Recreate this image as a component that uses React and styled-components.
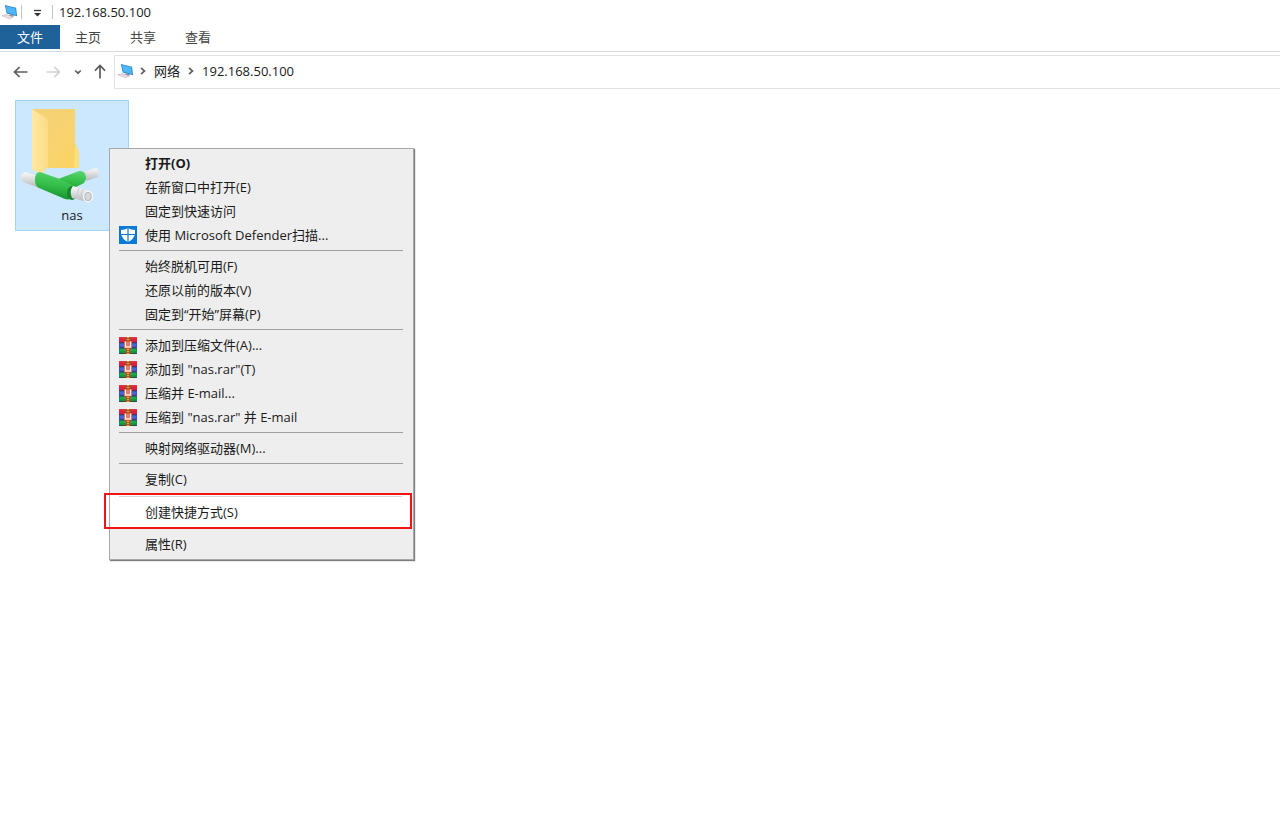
import React from "react";
import styled, { createGlobalStyle } from "styled-components";

const GlobalStyle = createGlobalStyle`
  * {
    box-sizing: border-box;
  }
  body {
    margin: 0;
    background: #ffffff;
    color: #1a1a1a;
    font-family: "Open Sans", "Noto Sans CJK SC", sans-serif;
    font-size: 13px;
    line-height: 24px;
  }
  button {
    font: inherit;
    color: inherit;
    background: none;
    border: 0;
    padding: 0;
  }
  svg {
    display: block;
    flex: none;
  }
`;

const Window = styled.div`
  display: flex;
  flex-direction: column;
  min-height: 100vh;
`;

const TitleBar = styled.header`
  display: flex;
  align-items: center;
  height: 25px;
  padding: 0 0 1px 2px;
`;

const Title = styled.h1`
  margin: 0;
  padding-left: 6px;
  font-size: 13px;
  font-weight: 400;
`;

const Divider = styled.span`
  width: 1px;
  height: 14px;
  margin: 0 ${(props) => props.$gap || 0}px 0 3px;
  background: #c4c4c4;
`;

const RibbonTabs = styled.nav`
  display: flex;
  height: 27px;
  border-bottom: 1px solid #dadbdc;
`;

const RibbonTab = styled.button`
  height: 24px;
  padding: 0 ${(props) => (props.$active ? 17 : 15)}px;
  color: ${(props) => (props.$active ? "#ffffff" : "#444444")};
  background: ${(props) => (props.$active ? "#1f6199" : "transparent")};
  & + & {
    margin-right: -1px;
  }
`;

const NavBar = styled.div`
  display: flex;
  align-items: center;
  padding-top: 3px;
`;

const NavButtons = styled.div`
  display: flex;
  align-items: center;
  width: 114px;
  padding-left: 13px;
`;

const NavButton = styled.button`
  display: flex;
  margin-right: ${(props) => props.$gap || 0}px;
  color: ${(props) => (props.disabled ? "#d2d2d2" : "#5c5c5c")};
`;

const AddressBar = styled.div`
  display: flex;
  flex: 1;
  align-items: center;
  gap: 5px;
  height: 34px;
  padding: 0 0 2px 3px;
  border: 1px solid #e2e2e2;
  border-right: 0;
`;

const Crumb = styled.button`
  padding: 0 2px;
`;

const Content = styled.main`
  position: relative;
  flex: 1;
  padding: 11px 15px;
`;

const FolderTile = styled.button`
  display: flex;
  flex-direction: column;
  align-items: center;
  width: 114px;
  height: 131px;
  padding-top: 5px;
  background: #cce8ff;
  border: 1px solid #a5d3f5;
`;

const FolderPicture = styled.span`
  align-self: flex-start;
  padding-left: 4px;
`;

const ContextMenu = styled.div`
  position: absolute;
  top: 59px;
  left: 109px;
  width: 305px;
  padding: 2px 0 3px;
  background: #eeeeee;
  border: 1px solid #a8a8a8;
  box-shadow: 1px 1px 1px rgba(0, 0, 0, 0.5);
`;

const MenuItem = styled.button`
  display: flex;
  align-items: center;
  width: 100%;
  height: 24px;
  padding-left: 9px;
  text-align: left;
  white-space: pre;
  font-weight: ${(props) => (props.$bold ? 700 : 400)};
`;

const IconSlot = styled.span`
  width: 26px;
`;

const Separator = styled.hr`
  height: 1px;
  margin: 3px 10px 3px 9px;
  border: 0;
  background: ${(props) => (props.$light ? "#d9d9d9" : "#a0a0a0")};
`;

const Highlighted = styled.div`
  position: relative;
  display: flow-root;
  margin: 2px 1px 3px 0;
  padding-bottom: 5px;
  background: #ffffff;
  &::after {
    content: "";
    position: absolute;
    inset: 0 0 0 -6px;
    border: 2px solid #f01414;
    pointer-events: none;
  }
`;

const ComputerIcon = () => (
  <svg width="16" height="16" viewBox="0 0 17 17" aria-hidden="true">
    <path d="M3 1 L15 4 L16 13 L5 10 Z" fill="#2e86c8" />
    <path d="M4 2 L14 4.6 L15 12 L5.5 9 Z" fill="#4db5fa" />
    <path d="M9 11 L13 12.4 L11 14 L7 12 Z" fill="#7d8b97" />
    <path d="M0 12.4 L4.5 11.4 L12 13.6 L8 15.6 Z" fill="#dfe1e7" stroke="#b7aebb" strokeWidth=".7" />
    <path d="M2 12.5 L9 14.5" stroke="#f6dbe1" />
  </svg>
);

const Arrow = ({ rotate = 0 }) => (
  <svg width="16" height="16" viewBox="0 0 16 16" aria-hidden="true">
    <g transform={`rotate(${rotate} 8 8)`} fill="none" stroke="currentColor" strokeWidth="1.7">
      <path d="M1.5 8 H14.5 M6.6 3 L1.5 8 L6.6 13" />
    </g>
  </svg>
);

const Chevron = ({ down }) => (
  <svg width="8" height="8" viewBox="0 0 8 8" aria-hidden="true">
    <path
      d={down ? "M1.2 2.5 L4 5.2 L6.8 2.5" : "M2 .8 L5.5 4 L2 7.2"}
      fill="none"
      stroke="#606060"
      strokeWidth="1.7"
    />
  </svg>
);

const FolderIcon = () => (
  <svg width="80" height="97" viewBox="0 0 80 97" aria-hidden="true">
    <defs>
      <linearGradient id="back" x1="0" y1="0" x2="1" y2="1">
        <stop offset="0" stopColor="#f5d27c" />
        <stop offset="1" stopColor="#fbd363" />
      </linearGradient>
      <linearGradient id="front" x1="0" y1="0" x2="1" y2="0">
        <stop offset="0" stopColor="#ffeaa4" />
        <stop offset="1" stopColor="#fbdc86" />
      </linearGradient>
      <linearGradient id="pipe" x1="0" y1="0" x2="0" y2="1">
        <stop offset="0" stopColor="#fafafa" />
        <stop offset="1" stopColor="#b5b9bd" />
      </linearGradient>
      <linearGradient id="green" x1=".6" y1="0" x2=".4" y2="1">
        <stop offset="0" stopColor="#58d46c" />
        <stop offset=".5" stopColor="#32bd48" />
        <stop offset="1" stopColor="#168b2b" />
      </linearGradient>
    </defs>
    <path d="M12 3 H55 V37 L59 46 V62 H25 Z" fill="url(#back)" />
    <path d="M55 39 L59 46 V62 L54 62 Z" fill="#ffdf7c" />
    <path d="M12 3 L26 12 Q28 14 28 17 V60 L22 68 L12 64 Z" fill="url(#front)" />
    <path d="M2 68 Q-1 71 3 76 L19 82 L21 71 L5 66 Z" fill="url(#pipe)" />
    <path d="M63 66 L76 62 Q80 63 78 71 L66 75 Z" fill="url(#pipe)" />
    <path d="M33 75 L59 65 Q66 64 66 73 L64 77 L46 86 Z" fill="url(#green)" />
    <path d="M20 66 Q15 66 15 74 Q15 80 19 82 L45 93 Q55 96 54 80 L40 73 Z" fill="url(#green)" />
    <ellipse cx="52" cy="87" rx="5" ry="7" fill="#16882d" />
    <path d="M53 80 L69 85 L68 96 L52 92 Q49 85 53 80 Z" fill="url(#pipe)" />
    <path d="M59 82 Q56 87 58 93 M63 83 Q60 88 62 94" fill="none" stroke="#c9cccf" strokeWidth="1" />
    <ellipse cx="68" cy="90.5" rx="4.4" ry="5.3" fill="#b3b7bb" stroke="#f5f5f5" strokeWidth="1.5" />
    <ellipse cx="68" cy="90.5" rx="2.6" ry="3.4" fill="#d7dadd" />
  </svg>
);

const DefenderIcon = () => (
  <svg width="18" height="18" viewBox="0 0 18 18" aria-hidden="true">
    <path d="M0 0 H18 V18 H0 Z" fill="#0878d7" />
    <path d="M9 2 Q12 4 16 4 V8 Q15 13 9 16 Q3 13 2 8 V4 Q6 4 9 2 Z" fill="#ffffff" />
    <path d="M9 2 V16 M2 8.5 H16" stroke="#0878d7" strokeWidth="1.2" />
  </svg>
);

const RarIcon = () => (
  <svg width="18" height="17" viewBox="0 0 18 17" aria-hidden="true">
    <path d="M0 0 H18 V6 H0 Z" fill="#d02340" />
    <path d="M0 1 H18" stroke="#ee4040" />
    <path d="M0 6 H18 V11 H0 Z" fill="#3555c4" />
    <path d="M0 11 H18 V17 H0 Z" fill="#109647" />
    <path d="M0 5.5 H18 M0 11 H18 M0 16.5 H18" stroke="#512c48" strokeWidth=".8" />
    <path d="M1 8 H17" stroke="#527bef" />
    <path d="M1 13 H17" stroke="#30be5a" />
    <path d="M6.5 0 H11.5 V17 H6.5 Z" fill="#a65a22" />
    <path d="M9 0 V17" stroke="#f1aa3b" strokeWidth="2" strokeDasharray="1 1" />
    <path d="M5 4 H13 V11.5 H5 Z" fill="#e84e27" />
    <path d="M6.5 4.5 V10 H11.5 V4.5" fill="none" stroke="#fff2e8" strokeWidth="1.5" />
    <path d="M9 5 V9" stroke="#a0a8c8" strokeWidth="1.4" />
  </svg>
);

const menuGroups = [
  [
    { label: "打开(O)", bold: true },
    { label: "在新窗口中打开(E)" },
    { label: "固定到快速访问" },
    { label: "使用 Microsoft Defender扫描...", icon: <DefenderIcon /> },
  ],
  [
    { label: "始终脱机可用(F)" },
    { label: "还原以前的版本(V)" },
    { label: "固定到“开始”屏幕(P)" },
  ],
  [
    { label: "添加到压缩文件(A)...", icon: <RarIcon /> },
    { label: '添加到 "nas.rar"(T)', icon: <RarIcon /> },
    { label: "压缩并 E-mail...", icon: <RarIcon /> },
    { label: '压缩到 "nas.rar" 并 E-mail', icon: <RarIcon /> },
  ],
  [{ label: "映射网络驱动器(M)..." }],
  [{ label: "复制(C)" }],
  [{ label: "创建快捷方式(S)", highlighted: true }],
  [{ label: "属性(R)" }],
];

const MenuRow = ({ item }) => (
  <MenuItem type="button" role="menuitem" $bold={item.bold}>
    <IconSlot>{item.icon}</IconSlot>
    {item.label}
  </MenuItem>
);

const MenuGroup = ({ items, first, afterHighlight }) => {
  if (items[0].highlighted) {
    return (
      <Highlighted>
        <Separator $light />
        <MenuRow item={items[0]} />
      </Highlighted>
    );
  }
  return (
    <>
      {!first && !afterHighlight && <Separator />}
      {items.map((item) => (
        <MenuRow key={item.label} item={item} />
      ))}
    </>
  );
};

const App = () => {
  return (
    <Window>
      <GlobalStyle />
      <TitleBar>
        <ComputerIcon />
        <Divider $gap={11} />
        <NavButton type="button" aria-label="自定义快速访问工具栏" $gap={7}>
          <svg width="9" height="9" viewBox="0 0 9 9" aria-hidden="true">
            <path d="M1 2.5 H8" stroke="#333333" strokeWidth="1.3" />
            <path d="M1 5 H8 L4.5 8.5 Z" fill="#333333" />
          </svg>
        </NavButton>
        <Divider />
        <Title>192.168.50.100</Title>
      </TitleBar>
      <RibbonTabs>
        <RibbonTab type="button" $active>文件</RibbonTab>
        <RibbonTab type="button">主页</RibbonTab>
        <RibbonTab type="button">共享</RibbonTab>
        <RibbonTab type="button">查看</RibbonTab>
      </RibbonTabs>
      <NavBar>
        <NavButtons>
          <NavButton type="button" aria-label="后退" $gap={16}>
            <Arrow />
          </NavButton>
          <NavButton type="button" aria-label="前进" $gap={13} disabled>
            <Arrow rotate={180} />
          </NavButton>
          <NavButton type="button" aria-label="最近浏览的位置" $gap={10}>
            <Chevron down />
          </NavButton>
          <NavButton type="button" aria-label="上移">
            <Arrow rotate={90} />
          </NavButton>
        </NavButtons>
        <AddressBar>
          <ComputerIcon />
          <Chevron />
          <Crumb type="button">网络</Crumb>
          <Chevron />
          <Crumb type="button">192.168.50.100</Crumb>
        </AddressBar>
      </NavBar>
      <Content>
        <FolderTile type="button">
          <FolderPicture>
            <FolderIcon />
          </FolderPicture>
          nas
        </FolderTile>
        <ContextMenu role="menu">
          {menuGroups.map((items, index) => (
            <MenuGroup
              key={items[0].label}
              items={items}
              first={index === 0}
              afterHighlight={index > 0 && menuGroups[index - 1][0].highlighted}
            />
          ))}
        </ContextMenu>
      </Content>
    </Window>
  );
};

export default App;
